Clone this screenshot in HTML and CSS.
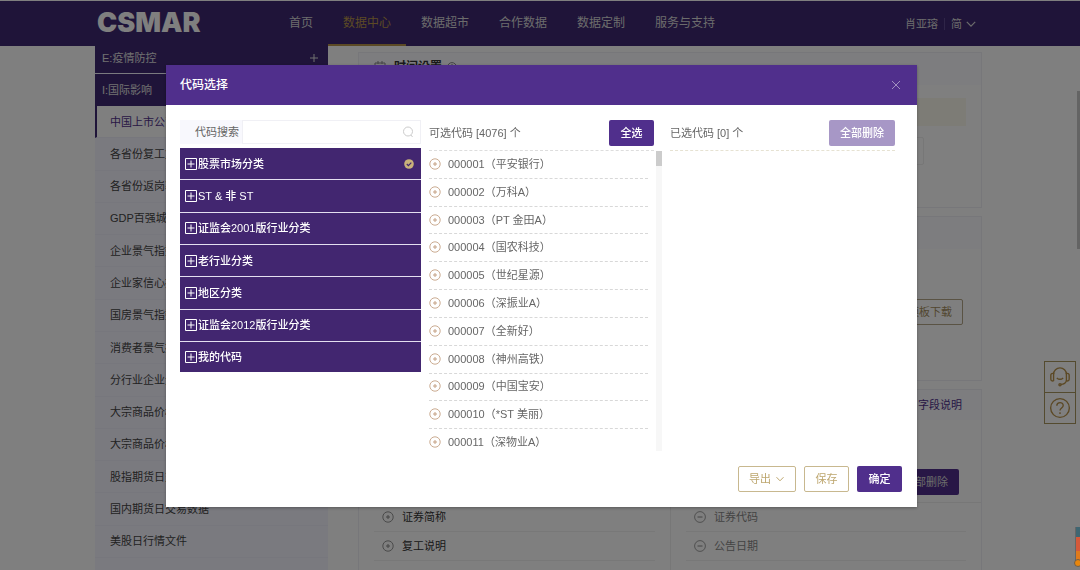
FILE: index.html
```html
<!DOCTYPE html>
<html lang="zh-CN">
<head>
<meta charset="utf-8">
<title>CSMAR</title>
<link rel="stylesheet" href="styles.css">
</head>
<body>
<svg class="sprite" aria-hidden="true">
  <symbol id="add" viewBox="0 0 12 12"><circle cx="6" cy="6" r="5.2" fill="none" stroke="currentColor" stroke-width=".9"/><path d="M4 6h4M6 4v4" stroke="currentColor" stroke-width="1"/></symbol>
  <symbol id="minus" viewBox="0 0 12 12"><circle cx="6" cy="6" r="5.4" fill="none" stroke="currentColor" stroke-width=".8"/><path d="M3.5 6h5" stroke="currentColor"/></symbol>
  <symbol id="box" viewBox="0 0 12 12"><path d="M.5.5h11v11H.5zM2.500 6h7M6 2.500v7" fill="none" stroke="currentColor"/></symbol>
  <symbol id="down" viewBox="0 0 10 10"><path d="M1.5 3.2 5 6.8l3.5-3.6" fill="none" stroke="currentColor"/></symbol>
</svg>
<div class="page">
  <header class="header">
    <a class="logo" href="#">CSMAR</a>
    <nav class="nav">
      <a href="#">首页</a><a class="current" href="#">数据中心</a><a href="#">数据超市</a><a href="#">合作数据</a><a href="#">数据定制</a><a href="#">服务与支持</a>
    </nav>
    <div class="account"><a href="#">肖亚瑢</a><span class="bar"></span><button class="lang">简 <svg class="icon"><use href="#down"/></svg></button></div>
  </header>
  <div class="body">
    <aside class="side">
      <button class="group">E:疫情防控<svg class="plus" viewBox="0 0 8 8"><path d="M0 4h8M4 0v8" stroke="currentColor"/></svg></button>
      <button class="group tall">I:国际影响</button>
      <ul class="tables">
        <li class="active"><a href="#">中国上市公司复工</a></li><li><a href="#">各省份复工复产</a></li><li><a href="#">各省份返岗率</a></li><li><a href="#">GDP百强城市</a></li><li><a href="#">企业景气指数</a></li><li><a href="#">企业家信心指数</a></li><li><a href="#">国房景气指数</a></li><li><a href="#">消费者景气指数</a></li><li><a href="#">分行业企业景气</a></li><li><a href="#">大宗商品价格</a></li><li><a href="#">大宗商品价格</a></li><li><a href="#">股指期货日交易</a></li><li><a href="#">国内期货日交易数据</a></li><li><a href="#">美股日行情文件</a></li>
      </ul>
    </aside>
    <main class="main">
      <section class="card time">
        <h2 class="card-head"><svg class="cal" viewBox="0 0 12 12"><path d="M1 2h10v9H1zM1 5h10M4 0v3M8 0v3" fill="none" stroke="currentColor"/></svg>时间设置<svg class="tip" viewBox="0 0 10 10"><circle cx="5" cy="5" r="4.4" fill="none" stroke="currentColor"/><path d="M5 4v4M5 2v1" stroke="currentColor"/></svg></h2>
        <div class="notice"></div>
        <div class="field"></div>
      </section>
      <section class="card code"><h2 class="card-head"></h2><button class="btn ghost">模板下载</button></section>
      <section class="card fields">
        <h2 class="card-head"><a href="#">字段说明</a></h2>
        <div class="field-actions"><button class="btn solid">全部删除</button></div>
        <div class="columns">
          <ul><li><svg class="icon"><use href="#add"/></svg>证券简称</li><li><svg class="icon"><use href="#add"/></svg>复工说明</li><li></li></ul>
          <ul class="chosen"><li><svg class="icon"><use href="#minus"/></svg>证券代码</li><li><svg class="icon"><use href="#minus"/></svg>公告日期</li><li></li></ul>
        </div>
      </section>
    </main>
  </div>
</div>
<div class="page-scroll"></div>
<div class="tools">
  <button aria-label="客服"><svg viewBox="0 0 24 24"><path d="M5 9a7 7 0 0 1 14 0M19 16q-1 4-6 4M8.500 13q3.500 3 7 0" /><path d="M5 8H4a2 2 0 0 0-2 2v4a2 2 0 0 0 3 2zM19 8h1a2 2 0 0 1 2 2v4a2 2 0 0 1-3 2z"/><circle cx="12" cy="20.500" r="1.200"/></svg></button>
  <button aria-label="帮助"><svg viewBox="0 0 24 24"><circle cx="12" cy="12" r="10.200"/><path d="M8.500 9.500C8.500 5 15.500 5 15.500 9.300c0 2.700-3.500 2.700-3.500 5.400M12 16.500v2"/></svg></button>
</div>
<div class="overlay">
  <div class="modal" role="dialog" aria-labelledby="title">
    <div class="modal-head"><h1 id="title">代码选择</h1><button class="close" aria-label="关闭"><svg viewBox="0 0 10 10"><path d="M1 1l8 8M9 1 1 9" stroke="currentColor"/></svg></button></div>
    <div class="panes">
      <div class="categories">
        <div class="search"><label for="q">代码搜索</label><div class="search-box"><input id="q" type="text"><svg class="icon" viewBox="0 0 12 12"><circle cx="6" cy="5.500" r="4.500" fill="none" stroke="currentColor"/><path d="m9 9 1.500 2" stroke="currentColor"/></svg></div></div>
        <ul class="tree">
          <li><button><svg class="icon"><use href="#box"/></svg>股票市场分类<svg class="check" viewBox="0 0 10 10"><circle cx="5" cy="5" r="4.800" fill="#c9b17a"/><path d="m2.800 5 1.600 1.600 2.900-3" fill="none" stroke="#422670" stroke-width="1.200"/></svg></button></li>
          <li><button><svg class="icon"><use href="#box"/></svg>ST &amp; 非 ST</button></li>
          <li><button><svg class="icon"><use href="#box"/></svg>证监会2001版行业分类</button></li>
          <li><button><svg class="icon"><use href="#box"/></svg>老行业分类</button></li>
          <li><button><svg class="icon"><use href="#box"/></svg>地区分类</button></li>
          <li><button><svg class="icon"><use href="#box"/></svg>证监会2012版行业分类</button></li>
          <li><button><svg class="icon"><use href="#box"/></svg>我的代码</button></li>
        </ul>
      </div>
      <div class="available">
        <div class="pane-head"><span>可选代码 [4076] 个</span><button class="btn solid">全选</button></div>
        <div class="scroller">
          <ul class="codes">
            <li><svg class="icon"><use href="#add"/></svg>000001（平安银行）</li>
            <li><svg class="icon"><use href="#add"/></svg>000002（万科A）</li>
            <li><svg class="icon"><use href="#add"/></svg>000003（PT 金田A）</li>
            <li><svg class="icon"><use href="#add"/></svg>000004（国农科技）</li>
            <li><svg class="icon"><use href="#add"/></svg>000005（世纪星源）</li>
            <li><svg class="icon"><use href="#add"/></svg>000006（深振业A）</li>
            <li><svg class="icon"><use href="#add"/></svg>000007（全新好）</li>
            <li><svg class="icon"><use href="#add"/></svg>000008（神州高铁）</li>
            <li><svg class="icon"><use href="#add"/></svg>000009（中国宝安）</li>
            <li><svg class="icon"><use href="#add"/></svg>000010（*ST 美丽）</li>
            <li><svg class="icon"><use href="#add"/></svg>000011（深物业A）</li>
          </ul>
          <div class="track"><div class="thumb"></div></div>
        </div>
      </div>
      <div class="selected"><div class="pane-head"><span>已选代码 [0] 个</span><button class="btn solid" disabled>全部删除</button></div></div>
    </div>
    <div class="modal-foot"><button class="btn ghost export">导出 <svg class="icon"><use href="#down"/></svg></button><button class="btn ghost">保存</button><button class="btn solid">确定</button></div>
  </div>
</div>
<svg class="mascot" viewBox="0 0 6 45"><path d="M2 2h4v12H2z" fill="#3f6672"/><path d="M2 12h4v27H2z" fill="#d5593a"/><path d="M1.500 2v34" stroke="#666" fill="none"/><path d="M2 26h4v12H2z" fill="#e07a1c"/><circle cx="4" cy="38" r="3.500" fill="#e8860c" stroke="#555" stroke-width=".8"/></svg>
</body>
</html>
```
FILE: styles.css
```css
* { box-sizing: border-box; }
body { margin: 0; height: 100vh; overflow: hidden; background: #fff; color: #666; font: 11px/16px "Liberation Sans", "Noto Sans CJK SC", sans-serif; }
ul { list-style: none; margin: 0; padding: 0; }
h1, h2 { margin: 0; font-size: 12px; line-height: 16px; }
h1 { font-weight: 500; }
a { color: inherit; text-decoration: none; }
button { font: inherit; color: inherit; background: none; border: 0; padding: 0; }
svg { flex: none; }
.sprite { display: none; }
.icon { width: 12px; height: 12px; }

.page { height: 100vh; overflow: hidden; }
.header { display: flex; height: 46px; padding: 0 103px 0 97px; background: #3e2872; border-top: 1px solid #fff; color: #d8d8d8; }
.logo { width: 177px; font: 900 27px/44px Inter, sans-serif; color: #fff; }
.nav { display: flex; font-size: 12px; line-height: 44px; }
.nav a { padding: 0 15px; height: 45px; }
.nav .current { color: #b8954a; border-bottom: 2px solid #b8954a; }
.account { display: flex; align-items: center; margin-left: auto; gap: 6px; }
.bar { width: 1px; height: 12px; background: #5e4a90; }
.lang { display: flex; align-items: center; gap: 3px; }
.body { display: flex; gap: 30px; padding: 0 98px 0 95px; }

.side { flex: none; width: 233px; height: 524px; background: #f4f4ff; }
.group { display: flex; justify-content: space-between; align-items: center; width: 100%; height: 28px; padding: 0 10px 4px 7px; background: #3e2872; color: #e0e0e0; border-bottom: 1px solid #f4f4ff; }
.group.tall { height: 32px; padding-bottom: 0; border: 0; }
.plus { width: 8px; height: 8px; }
.tables { display: grid; grid-auto-rows: 1fr; height: 452px; color: #444; }
.tables li { display: flex; align-items: center; padding-left: 15px; border-bottom: 1px solid #efeffb; }
.tables .active { padding-left: 13px; background: #fff; color: #4f318c; border-left: 2px solid #3e2872; }

.main { flex: 1; min-width: 0; display: grid; gap: 8px; align-content: start; padding-top: 6px; }
.card { display: flex; flex-direction: column; border: 1px solid #eeeef4; }
.time { height: 156px; }
.code { height: 165px; }
.card-head { display: flex; align-items: center; height: 32px; padding: 0 19px 0 15px; background: #fafaff; color: #333; }
.time .card-head { padding-bottom: 4px; }
.fields .card-head { height: 30px; }
.cal { width: 12px; height: 12px; margin-right: 8px; color: #888; }
.tip { width: 10px; height: 10px; margin-left: 5px; color: #888; }
.notice { height: 28px; margin: 13px 15px 11px; background: #fbf8ec; }
.field { height: 28px; margin: 0 57px 0 15px; border: 1px solid #eee; border-radius: 2px; }
.code .btn { align-self: flex-end; margin: 50px 18px 0 0; }
.card-head a { margin-left: auto; color: #4f318c; font-size: 11px; font-weight: 400; }
.field-actions { display: flex; justify-content: flex-end; padding: 49px 22px 7px; }
.columns { display: grid; grid-template-columns: 1fr 1fr; color: #333; border-top: 1px solid #eee; }
.columns ul { padding: 0 15px; }
.columns li { display: flex; align-items: center; gap: 8px; height: 29px; padding-left: 8px; border-bottom: 1px solid #f0f0f0; }
.columns .icon { color: #888; }
.columns .chosen { border-left: 1px solid #eee; color: #888; }

.page-scroll { position: absolute; right: 0; top: 91px; width: 3px; height: 158px; background: #c8c8c8; }
.tools { position: absolute; right: 4px; top: 361px; width: 32px; display: grid; border: 1px solid #a8965f; color: #b8924a; }
.tools button { display: grid; place-items: center; height: 30px; }
.tools button + button { height: 31px; border-top: 1px solid #a8965f; }
.tools svg { width: 22px; height: 22px; fill: none; stroke: currentColor; stroke-width: 1.5; }

.btn { height: 26px; padding: 0 10px; min-width: 45px; border: 1px solid transparent; border-radius: 2px; }
.solid { background: #502f8c; color: #fff; font-weight: 500; }
.solid:disabled { background: #a797c6; }
.ghost { border-color: #c8b88f; color: #bda66e; }
.page .ghost { color: #a58e60; border-color: #b4a688; }
.page .solid { font-weight: 400; color: #d8d8d8; }

.overlay { position: fixed; inset: 0; padding: 65px 163px 0 166px; background: rgba(0, 0, 0, .5); }
.modal { background: #fff; box-shadow: 0 1px 3px rgba(0, 0, 0, .3); }
.modal-head { display: flex; align-items: center; justify-content: space-between; height: 40px; padding: 0 16px 0 14px; background: #502f8c; color: #fff; }
.close { display: flex; width: 10px; color: #a08fc0; }
.close svg { width: 10px; height: 10px; }
.panes { display: grid; grid-template-columns: 241px 233px 1fr; gap: 8px; height: 346px; padding: 15px 22px 0 14px; }
.search { display: flex; height: 24px; margin-bottom: 4px; background: #f8f8fd; }
.search label { width: 62px; padding-left: 15px; line-height: 24px; white-space: nowrap; }
.search-box { position: relative; flex: 1; min-width: 0; }
.search input { width: 100%; height: 24px; border: 1px solid #f0f0f5; background: #fff; font: inherit; padding: 0 24px 0 8px; }
.search .icon { position: absolute; right: 7px; top: 6px; color: #ccc; }
.tree { display: grid; grid-template-rows: repeat(6, 1fr) 30px; height: 224px; }
.tree li { background: #422670; border-bottom: 1px solid #e4dff0; }
.tree li:last-child { border: 0; }
.tree button { display: flex; align-items: center; gap: 1px; width: 100%; height: 100%; padding: 0 7px 0 5px; color: #fff; font-weight: 500; }
.check { width: 10px; height: 10px; margin-left: auto; }
.pane-head { display: flex; align-items: center; justify-content: space-between; height: 31px; padding-bottom: 4px; border-bottom: 1px dashed #ddd; }
.available .pane-head { margin-right: 8px; }
.selected .pane-head { border-color: #e6e2d2; }
.scroller { display: flex; justify-content: space-between; gap: 8px; height: 300px; overflow: hidden; }
.codes { flex: 1; display: grid; grid-auto-rows: 1fr; height: 306px; }
.codes li { display: flex; align-items: center; gap: 7px; padding-bottom: 1px; border-bottom: 1px dashed #d8d8d8; }
.codes .icon { color: #c4a184; }
.track { width: 6px; background: #f7f7f7; }
.thumb { height: 15px; background: #ccc; }
.modal-foot { display: flex; justify-content: flex-end; gap: 8px; padding: 15px; }
.export { display: flex; align-items: center; gap: 4px; }
.export .icon { width: 10px; height: 10px; }
.mascot { position: fixed; right: 0; bottom: 0; width: 6px; height: 45px; }
```
